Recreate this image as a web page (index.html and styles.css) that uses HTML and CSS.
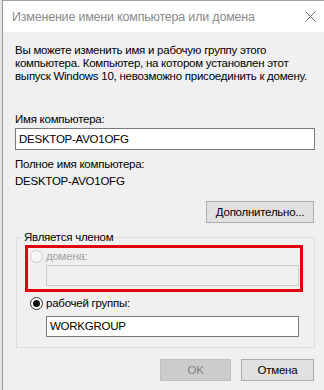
FILE: index.html
```
<!DOCTYPE html>
<html lang="ru">
<head>
<meta charset="utf-8">
<title>Изменение имени компьютера или домена</title>
<link rel="stylesheet" href="styles.css">
</head>
<body>
<div class="screen">
  <div class="window">
    <div class="titlebar">
      <span class="title">Изменение имени компьютера или домена</span>
      <svg class="close" width="11" height="11" viewBox="0 0 11 11"><path d="M0.5 0.5L10.5 10.5M10.5 0.5L0.5 10.5" stroke="#666" stroke-width="1" fill="none"/></svg>
    </div>
    <div class="content">
      <p class="intro">Вы можете изменить имя и рабочую группу этого<br>компьютера. Компьютер, на котором установлен этот<br>выпуск Windows 10, невозможно присоединить к домену.</p>
      <div class="label first">Имя компьютера:</div>
      <div class="input">DESKTOP-AVO1OFG</div>
      <div class="label full">Полное имя компьютера:</div>
      <div class="value">DESKTOP-AVO1OFG</div>
      <div class="btn-row"><div class="btn more">Дополнительно...</div></div>
      <div class="group">
        <span class="legend">Является членом</span>
        <div class="highlight">
          <div class="radio-row disabled"><span class="radio"></span><span>домена:</span></div>
          <div class="input disabled-input"></div>
        </div>
        <div class="radio-row wg"><span class="radio checked"></span><span>рабочей группы:</span></div>
        <div class="input wg-input">WORKGROUP</div>
      </div>
      <div class="footer">
        <div class="btn ok">OK</div>
        <div class="btn cancel">Отмена</div>
      </div>
    </div>
  </div>
</div>
</body>
</html>
```
FILE: styles.css
```
html, body {
  margin: 0;
  padding: 0;
  background: #e4e4e4;
  overflow: hidden;
}
.screen {
  padding-left: 2px;
  height: 390px;
}
.window {
  box-sizing: border-box;
  width: 322px;
  height: 390px;
  border-top: 1px solid #a3a3a3;
  border-left: 1px solid #9a9a9a;
  background: #f0f0f0;
  font-family: "Liberation Sans", Arial, sans-serif;
  font-size: 11.5px;
  letter-spacing: -0.25px;
  color: #000;
}
.titlebar {
  height: 31px;
  background: #fff;
  display: flex;
  align-items: center;
  padding-left: 9px;
  padding-right: 8px;
}
.title {
  font-size: 12.5px;
  letter-spacing: -0.2px;
  color: #8a8a8a;
  white-space: nowrap;
}
.close {
  margin-left: auto;
}
.content {
  width: 300px;
  padding-left: 12px;
  padding-top: 12px;
  display: flex;
  flex-direction: column;
}
.intro {
  margin: 0;
  line-height: 13px;
  white-space: nowrap;
}
.label, .value {
  line-height: 13px;
  white-space: nowrap;
}
.label.first {
  margin-top: 30px;
}
.input {
  box-sizing: border-box;
  height: 22px;
  border: 1px solid #7a7a7a;
  background: #fff;
  margin-top: 2px;
  padding-left: 3px;
  line-height: 20px;
}
.label.full {
  margin-top: 8px;
}
.value {
  margin-top: 4px;
}
.btn-row {
  display: flex;
  justify-content: flex-end;
  margin-top: 13px;
  margin-right: 1px;
}
.btn {
  box-sizing: border-box;
  height: 22px;
  border: 1px solid #adadad;
  background: #e1e1e1;
  text-align: center;
  line-height: 20px;
  white-space: nowrap;
}
.more {
  width: 108px;
}
.group {
  margin-top: 14px;
  margin-left: 1px;
  width: 299px;
  box-sizing: border-box;
  border: 1px solid #dcdcdc;
  display: flex;
  flex-direction: column;
  padding: 0 0 10px 0;
}
.legend {
  align-self: flex-start;
  margin-top: -7px;
  margin-left: 6px;
  padding: 0 1px;
  line-height: 13px;
  background: #f0f0f0;
}
.highlight {
  box-sizing: border-box;
  width: 278px;
  margin-top: 1px;
  margin-left: 8px;
  border: 3px solid #e0000f;
  padding: 1px 0 3px 0;
  display: flex;
  flex-direction: column;
}
.radio-row {
  display: flex;
  align-items: center;
  height: 14px;
  line-height: 13px;
}
.radio {
  box-sizing: border-box;
  width: 13px;
  height: 13px;
  border-radius: 50%;
  border: 1px solid #333;
  background: #fff;
  margin-right: 3px;
  position: relative;
}
.highlight .radio {
  margin-left: 2px;
}
.disabled {
  color: #a0a0a0;
}
.disabled .radio {
  border-color: #cccccc;
  background: #f7f7f7;
}
.radio.checked::after {
  content: "";
  position: absolute;
  left: 2px;
  top: 2px;
  width: 7px;
  height: 7px;
  border-radius: 50%;
  background: #111;
}
.disabled-input {
  margin-top: 2px;
  margin-left: 18px;
  width: 253px;
  height: 21px;
  border-color: #cccccc;
  background: #f0f0f0;
}
.wg {
  margin-top: 4px;
  margin-left: 13px;
}
.wg-input {
  margin-left: 29px;
  width: 253px;
  height: 21px;
  line-height: 19px;
  margin-top: 6px;
}
.footer {
  display: flex;
  justify-content: flex-end;
  gap: 10px;
  margin-top: 11px;
  margin-right: 1px;
}
.ok {
  width: 71px;
  background: #cccccc;
  border-color: #bfbfbf;
  color: #838383;
}
.cancel {
  width: 73px;
}
```
